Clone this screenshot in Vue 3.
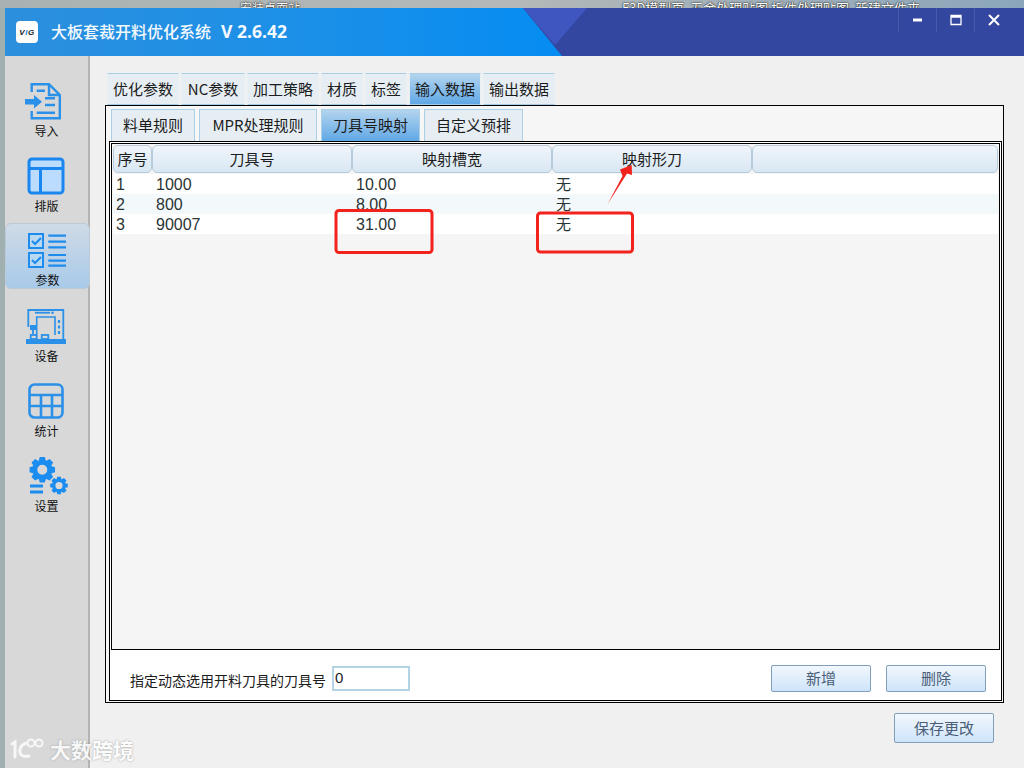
<script setup>
const topTabs = [
  { label: '优化参数', w: 72 },
  { label: 'NC参数', w: 64 },
  { label: '加工策略', w: 72 },
  { label: '材质', w: 42 },
  { label: '标签', w: 42 },
  { label: '输入数据', w: 72, active: true },
  { label: '输出数据', w: 72 }
]
const subTabs = [
  { label: '料单规则', w: 84 },
  { label: 'MPR处理规则', w: 118 },
  { label: '刀具号映射', w: 99, active: true },
  { label: '自定义预排', w: 99 }
]
const rows = [
  { n: 1, tool: '1000', width: '10.00', shape: '无' },
  { n: 2, tool: '800', width: '8.00', shape: '无' },
  { n: 3, tool: '90007', width: '31.00', shape: '无' }
]
const navs = ['导入', '排版', '参数', '设备', '统计', '设置']

function gear(cx, cy, ro, ri, hole, teeth) {
  const pts = []
  const step = (Math.PI * 2) / teeth
  for (let i = 0; i < teeth; i++) {
    const a = i * step
    const spec = [[-0.5, ri], [-0.28, ro], [0.28, ro], [0.5, ri]]
    for (const [k, r] of spec) {
      const t = a + k * step * 0.9
      pts.push((cx + r * Math.cos(t)).toFixed(2) + ' ' + (cy + r * Math.sin(t)).toFixed(2))
    }
  }
  const ring = `M${cx - hole} ${cy}a${hole} ${hole} 0 1 0 ${hole * 2} 0a${hole} ${hole} 0 1 0 ${-hole * 2} 0z`
  return 'M' + pts.join('L') + 'Z' + ring
}
const bigGear = gear(13.3, 12.8, 13, 10, 5, 8)
const smallGear = gear(30, 28.5, 9, 6.8, 3.6, 8)
</script>

<template>
  <div class="screen">
    <div class="desk">
      <span class="desk-a">安装桌面站</span>
      <span class="desk-b">F3D模型页&nbsp; 五金处理贴图 板件处理贴图&nbsp; 新建文件夹</span>
    </div>
    <div class="body">
      <div class="edge"></div>
      <div class="window">
        <header class="title">
          <div class="logo"><span class="lg-a">V</span><span class="lg-b">I</span><span class="lg-a">G</span></div>
          <div class="title-text">大板套裁开料优化系统</div>
          <div class="version">V 2.6.42</div>
          <svg class="deco" width="501" height="48" viewBox="0 0 501 48">
            <polygon points="0,0 501,0 501,48 39,48" fill="#3447a0" />
            <polygon points="0,0 64,0 32,37" fill="#3f55c0" />
          </svg>
          <div class="win-btns">
            <div class="win-btn"><svg width="12" height="12" viewBox="0 0 12 12"><rect x="1" y="4.500" width="9" height="3" fill="#fff" /></svg></div>
            <div class="win-btn"><svg width="12" height="12" viewBox="0 0 12 12"><path d="M1 1.500h10v9h-10z M1 3h10" fill="none" stroke="#fff" stroke-width="1.300" /></svg></div>
            <div class="win-btn last"><svg width="12" height="12" viewBox="0 0 12 12"><path d="M1 1l10 10M11 1L1 11" stroke="#fff" stroke-width="2" /></svg></div>
          </div>
        </header>
        <div class="main">
          <aside class="side">
            <div v-for="(n, i) in navs" :key="n" class="nav" :class="{ on: i === 2 }">
              <div class="icon" :class="'i' + i">
                <svg v-if="i === 0" width="36" height="37" viewBox="0 0 36 37" fill="none" stroke="#2b90e8" stroke-width="2.400">
                  <path d="M6.700 9V1.200H24L34.800 12V35.200H6.700V28" /><path d="M24 1.200V12H34.800" />
                  <path d="M11.700 7.700H20M20 15.300H30M20 22H30M11.700 29.700H30" />
                  <path d="M0 16h9v-4l8 6.700-8 6.700v-4H0z" fill="#2b90e8" stroke="none" />
                </svg>
                <svg v-else-if="i === 1" width="38" height="38" viewBox="0 0 38 38">
                  <rect x="2" y="2" width="34" height="34" rx="3" fill="#bcdcff" stroke="#1a86f0" stroke-width="3" />
                  <path d="M2 11.500h34M13.500 11.500V36" stroke="#1a86f0" stroke-width="3" fill="none" />
                </svg>
                <svg v-else-if="i === 2" width="38" height="35" viewBox="0 0 38 35" fill="none" stroke="#1e8cec" stroke-width="2">
                  <rect x="1" y="1" width="14" height="14" fill="#b9d8f2" /><rect x="1" y="20" width="14" height="14" fill="#b9d8f2" />
                  <path d="M4 8l3 3 6-6M4 27l3 3 6-6" stroke-width="2.200" />
                  <path d="M20.300 2.700H38M20.300 8.700H38M20.300 14.300H38M20.300 22H38M20.300 27.700H38M20.300 32.700H38" stroke-width="2.200" />
                </svg>
                <svg v-else-if="i === 3" width="40" height="35" viewBox="0 0 40 35" fill="none" stroke="#2b90e8" stroke-width="1.800">
                  <path d="M2.300 18V1h35v29" /><path d="M10.700 26V8H29v18" stroke-width="1.600" /><path d="M9 3.700h15" />
                  <circle cx="26.500" cy="3.700" r="1.300" fill="#2b90e8" stroke="none" />
                  <rect x="4" y="16" width="6.500" height="5" fill="#2b90e8" stroke="none" /><path d="M7 21v4" />
                  <path d="M33 11v3M33 16.500v3M33 22v3" stroke-width="2.200" />
                  <rect x="4.700" y="26" width="6" height="4" /><rect x="15.700" y="26" width="6.600" height="4" />
                  <rect x="0" y="30" width="40" height="5" fill="#2b90e8" stroke="none" />
                </svg>
                <svg v-else-if="i === 4" width="36" height="36" viewBox="0 0 36 36" fill="none" stroke="#2b90e8" stroke-width="2.600">
                  <rect x="1.500" y="1.500" width="33" height="33" rx="5" /><path d="M1.500 12h33M1.500 23h33M13 12v22.500M24 12v22.500" />
                </svg>
                <svg v-else width="39" height="39" viewBox="0 0 39 39" fill="#1b8cf0">
                  <path fill-rule="evenodd" :d="bigGear" />
                  <path fill-rule="evenodd" :d="smallGear" />
                  <rect x="1" y="27.500" width="13" height="3" /><rect x="1" y="33.500" width="13" height="3" />
                </svg>
              </div>
              <div class="nav-label">{{ n }}</div>
            </div>
          </aside>
          <section class="content">
            <div class="tabs top">
              <div v-for="t in topTabs" :key="t.label" class="tab" :class="{ active: t.active }" :style="{ width: t.w + 'px' }">{{ t.label }}</div>
            </div>
            <div class="outer">
              <div class="tabs sub">
                <div v-for="t in subTabs" :key="t.label" class="tab" :class="{ active: t.active }" :style="{ width: t.w + 'px' }">{{ t.label }}</div>
              </div>
              <div class="page">
                <div class="table">
                  <div class="thead">
                    <div class="th c0">序号</div>
                    <div class="th c1">刀具号</div>
                    <div class="th c2">映射槽宽</div>
                    <div class="th c3">映射形刀</div>
                    <div class="th c4"></div>
                  </div>
                  <div v-for="r in rows" :key="r.n" class="tr" :class="{ alt: r.n === 2 }">
                    <div class="td c0">{{ r.n }}</div>
                    <div class="td c1">{{ r.tool }}</div>
                    <div class="td c2">{{ r.width }}</div>
                    <div class="td c3">{{ r.shape }}</div>
                  </div>
                </div>
                <div class="foot">
                  <span class="foot-label">指定动态选用开料刀具的刀具号</span>
                  <div class="field">0</div>
                  <div class="foot-btns">
                    <button class="btn">新增</button>
                    <button class="btn">删除</button>
                  </div>
                </div>
              </div>
            </div>
            <div class="save"><button class="btn big">保存更改</button></div>
          </section>
        </div>
        <svg class="notes" width="1019" height="760" viewBox="0 0 1019 760" fill="none" stroke="#f2221c">
          <rect x="331" y="202.500" width="96" height="42" rx="3" stroke-width="3" />
          <rect x="532.500" y="205" width="95" height="39" rx="3" stroke-width="3" />
          <path d="M602.700 196L617.500 168L615 161.500L626.700 157L627 167L622 165.500Z" fill="#f2221c" stroke="none" />
        </svg>
        <div class="mark">
          <svg width="34" height="24" viewBox="0 0 34 24" fill="none" stroke="#fff" stroke-width="3" stroke-linecap="round">
            <path d="M2 7l3-2v15" />
            <path d="M16 6c-5 2-7 6-6 10 1 3 5 4 9 3" />
            <circle cx="21" cy="6" r="3.500" stroke-width="2" /><circle cx="29" cy="6" r="3.500" stroke-width="2" />
          </svg>
          <span>大数跨境</span>
        </div>
      </div>
    </div>
  </div>
</template>

<style>
html, body { margin: 0; background: #f0f0f0; }
</style>

<style scoped>
.screen {
  width: 1024px;
  height: 768px;
  overflow: hidden;
  font-family: "Noto Sans CJK SC", "Liberation Sans", sans-serif;
  font-size: 15px;
  color: #1c1c1c;
  display: flex;
  flex-direction: column;
}
.desk {
  height: 8px;
  flex: none;
  background: linear-gradient(90deg, #a9b2b2 0%, #b4b8b8 50%, #8ba6bb 100%);
  overflow: hidden;
  display: flex;
  font-size: 13px;
  line-height: 14px;
  color: #fff;
  text-shadow: 0 0 2px #111, 0 0 1px #111;
}
.desk-a { margin: 1px 0 0 240px; width: 382px; font-size: 12px; }
.desk-b { margin: 1px 0 0 0; white-space: nowrap; }
.body { flex: 1; display: flex; min-height: 0; }
.edge { width: 5px; flex: none; background: #a0afaf; }
.window { flex: 1; display: flex; flex-direction: column; min-width: 0; position: relative; }
.title {
  height: 48px;
  flex: none;
  position: relative;
  display: flex;
  align-items: center;
  background: linear-gradient(90deg, #2c8fdd 0%, #1b90e8 30%, #058cf2 55%, #058cf2 100%);
  color: #f4f9fd;
}
.logo {
  width: 22px;
  height: 22px;
  margin-left: 11px;
  background: #fff;
  border-radius: 4px;
  display: flex;
  align-items: center;
  justify-content: center;
  font: italic bold 8px "Liberation Sans", sans-serif;
  letter-spacing: 0.5px;
  flex: none;
}
.lg-a { color: #15181c; }
.lg-b { color: #2b7fd8; }
.title-text {
  margin-left: 13px;
  padding-bottom: 2px;
  font-size: 16px;
  font-weight: 500;
  position: relative;
  z-index: 1;
  white-space: nowrap;
}
.version {
  margin-left: 10px;
  padding-bottom: 2px;
  font: 700 17.5px "Open Sans", sans-serif;
  position: relative;
  z-index: 1;
  white-space: nowrap;
}
.deco { position: absolute; right: 0; top: 0; }
.win-btns { position: absolute; right: 11px; top: 0; display: flex; }
.win-btn {
  width: 37px;
  height: 24px;
  display: flex;
  align-items: center;
  justify-content: center;
  border-left: 1px solid #4659ad;
}
.win-btn.last { width: 38px; }
.main { flex: 1; display: flex; min-height: 0; }
.side {
  width: 83px;
  flex: none;
  background: #d8d8d8;
  border-right: 2px solid #b4b4b4;
  padding-top: 17px;
  display: flex;
  flex-direction: column;
}
.nav {
  height: 75px;
  display: flex;
  flex-direction: column;
  align-items: center;
  box-sizing: border-box;
  padding-top: 8px;
  position: relative;
  flex: none;
}
.icon { height: 40px; align-self: flex-start; display: flex; align-items: center; }
.i0 { margin-left: 20px; }
.i1 { margin-left: 22px; }
.i2 { margin-left: 23px; }
.i3 { margin-left: 21px; }
.i4 { margin-left: 23px; }
.i5 { margin-left: 24px; }
.nav-label { font-size: 12px; line-height: 16px; margin-top: 2px; color: #111; }
.nav.on {
  margin-right: -2px;
  background: linear-gradient(180deg, #cfdae6 0%, #a8cae9 100%);
  border: 1px solid #bcc9d6;
  border-radius: 6px;
  height: 66px;
  margin-bottom: 9px;
  padding-top: 7px;
}
.nav.on .icon { margin-left: 22px; }
.content {
  flex: 1;
  min-width: 0;
  background: #f0f0f0;
  padding: 17px 20px 0 15px;
  box-sizing: border-box;
  display: flex;
  flex-direction: column;
}
.tabs { display: flex; flex: none; }
.tabs.top { height: 32px; margin-left: 2px; gap: 2px; }
.tab {
  box-sizing: border-box;
  height: 100%;
  padding-bottom: 2px;
  background: #e6eef4;
  border: 1px solid #a9d0e4;
  border-bottom: 0;
  display: flex;
  align-items: center;
  justify-content: center;
  white-space: nowrap;
  color: #1c1c1c;
}
.tabs.top .tab { border-color: #e8f0f5; border-top-color: #a9d0e4; border-bottom: 1px solid #a4cde2; }
.tab.active { background: linear-gradient(180deg, #b3d4ee 0%, #60a8e6 100%); }
.outer {
  height: 598px;
  flex: none;
  box-sizing: border-box;
  border: 1px solid #000;
  background: #f6f6f6;
  padding: 3px 1px 1px 3px;
  display: flex;
  flex-direction: column;
}
.tabs.sub { height: 32px; gap: 4px; margin-left: 2px; }
.page {
  flex: 1;
  min-height: 0;
  box-sizing: border-box;
  border: 1px solid #000;
  padding: 1px 1px 0 1px;
  background: #fff;
  display: flex;
  flex-direction: column;
}
.table {
  flex: 1;
  min-height: 0;
  box-sizing: border-box;
  border: 1px solid #000;
  background: #f5f5f5;
  padding: 1px 1px 0 1px;
}
.thead { display: flex; height: 29px; }
.th {
  box-sizing: border-box;
  height: 28px;
  padding-bottom: 2px;
  background: linear-gradient(180deg, #f0f5fa 0%, #d8e7f3 100%);
  border: 1px solid #b7cbda;
  border-radius: 5px;
  display: flex;
  align-items: center;
  justify-content: center;
}
.c0 { width: 39px; flex: none; }
.c1, .c2, .c3 { width: 200px; flex: none; }
.c4 { flex: 1; }
.tr {
  display: flex;
  height: 20px;
  background: #fff;
  line-height: 20px;
  font-family: "Liberation Sans", "Noto Sans CJK SC", sans-serif;
  font-size: 16px;
}
.tr.alt { background: #f3f9fb; }
.td { box-sizing: border-box; padding: 1px 0 0 4px; color: #2a3434; }
.td.c0 { padding-left: 3px; }
.td.c3 { font-size: 15px; }
.foot {
  height: 50px;
  flex: none;
  background: #fff;
  display: flex;
  align-items: flex-start;
  padding: 15px 14px 0 19px;
  box-sizing: border-box;
}
.foot-label { font-size: 14px; line-height: 20px; margin-top: 5px; }
.field {
  width: 78px;
  height: 25px;
  box-sizing: border-box;
  margin: 1px 0 0 6px;
  border: 2px solid #b5d3e6;
  background: #fff;
  font: 15px/19px "Liberation Sans", sans-serif;
  padding-left: 1px;
}
.foot-btns { margin-left: auto; display: flex; gap: 15px; }
.btn {
  width: 100px;
  height: 27px;
  box-sizing: border-box;
  border: 1px solid #7f9fbd;
  border-radius: 2px;
  background: linear-gradient(180deg, #f1f7fd 0%, #cfe4fa 100%);
  color: #4a5e78;
  font: inherit;
  padding: 0 0 2px;
}
.save { display: flex; justify-content: flex-end; padding: 10px 10px 0 0; }
.btn.big { height: 30px; }
.notes { position: absolute; left: 0; top: 0; pointer-events: none; }
.mark {
  position: absolute;
  left: 5px;
  top: 727px;
  display: flex;
  align-items: center;
  gap: 6px;
  font-size: 21px;
  line-height: 28px;
  color: #fff;
  opacity: .8;
  font-weight: 700;
  text-shadow: 0 0 2px #888;
}
</style>
